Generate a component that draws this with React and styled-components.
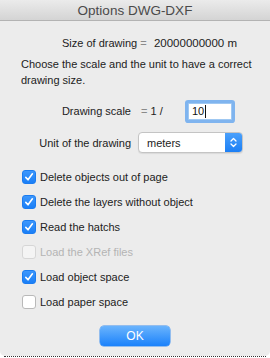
import React from 'react'
import styled, { createGlobalStyle } from 'styled-components'

const Global = createGlobalStyle`
  html, body {
    margin: 0;
    padding: 0;
    background: #ffffff;
  }
  body {
    font-family: "Liberation Sans", Arial, sans-serif;
    font-size: 11px;
    color: #222;
  }
`;

const Window = styled.div`
  width: 270px;
  height: 356px;
  background: #ececec;
  border-radius: 0 0 5px 5px;
  display: flex;
  flex-direction: column;
  overflow: hidden;
`;

const TitleBar = styled.div`
  height: 20px;
  background: linear-gradient(#ebebeb, #d4d4d4);
  border-bottom: 1px solid #b3b3b3;
  display: flex;
  align-items: center;
  justify-content: center;
  font-size: 13.5px;
  color: #4a4a4a;
`;

const Body = styled.div`
  display: flex;
  flex-direction: column;
  padding: 14px 0 0 21px;
`;

const SizeRow = styled.div`
  display: flex;
  gap: 4px;
  padding-left: 41px;
  line-height: 16px;
  white-space: nowrap;
`;

const Value = styled.span`
  font-size: 11.5px;
`;

const Equals = styled.span`
  color: #8a8a8a;
`;

const Text = styled.p`
  margin: 5px 0 0;
  width: 235px;
  line-height: 16px;
`;

const Form = styled.div`
  display: grid;
  grid-template-columns: 110px auto;
  column-gap: 7px;
  row-gap: 10px;
  margin-top: 12px;
  align-items: center;
`;

const Label = styled.span`
  text-align: right;
`;

const ScaleCell = styled.div`
  display: flex;
  align-items: center;
  height: 22px;
`;

const Ratio = styled.span`
  width: 47px;
  padding-left: 3px;
`;

const Input = styled.div`
  width: 44px;
  height: 17px;
  box-sizing: border-box;
  background: #fff;
  border: 1px solid #9fc8f2;
  box-shadow: 0 0 0 3px #7fb4ef;
  border-radius: 1px;
  display: flex;
  align-items: center;
  padding-left: 3px;
  color: #111;
`;

const Caret = styled.span`
  width: 1px;
  height: 13px;
  background: #111;
  margin-left: 1px;
`;

const Select = styled.div`
  width: 105px;
  height: 21px;
  box-sizing: border-box;
  background: #fff;
  border: 1px solid #c4c4c4;
  border-radius: 4px;
  display: flex;
  align-items: center;
  box-shadow: 0 1px 1px rgba(0, 0, 0, 0.08);
  overflow: hidden;
`;

const SelectText = styled.span`
  flex: 1;
  padding-left: 8px;
`;

const Stepper = styled.div`
  width: 17px;
  height: 100%;
  background: linear-gradient(#4aa0fb, #1c7ff5);
  display: flex;
  align-items: center;
  justify-content: center;
`;

const Checks = styled.div`
  display: flex;
  flex-direction: column;
  margin-top: 11px;
  padding-left: 1px;
`;

const CheckRow = styled.div`
  height: 25px;
  display: flex;
  align-items: center;
  gap: 4px;
  color: ${p => (p.disabled ? '#b4b4b4' : '#222')};
`;

const Box = styled.div`
  width: 14px;
  height: 14px;
  box-sizing: border-box;
  border-radius: 3px;
  display: flex;
  align-items: center;
  justify-content: center;
  background: ${p => (p.checked ? 'linear-gradient(#3d97fc, #1a7ff7)' : p.disabled ? '#f4f4f4' : '#fff')};
  border: 1px solid ${p => (p.checked ? '#1b7cf0' : p.disabled ? '#d6d6d6' : '#b9b9b9')};
`;

const Footer = styled.div`
  display: flex;
  justify-content: center;
  margin-top: 12px;
  padding-right: 21px;
`;

const OkButton = styled.button`
  width: 70px;
  height: 20px;
  border: none;
  border-radius: 4px;
  background: linear-gradient(#6ab4fd, #1b82fb);
  box-shadow: 0 0 0 0.5px #3b8ef0;
  color: #fff;
  font-family: inherit;
  font-size: 12px;
  padding: 0;
`;

const Below = styled.div`
  height: 2px;
  border-top: 1px dotted #333;
  margin: 0 4px;
`;

const Check = () => (
  <svg width="10" height="10" viewBox="0 0 10 10">
    <path d="M1.8 5.4 L4 7.8 L8.4 1.8" fill="none" stroke="#fff" strokeWidth="1.6" strokeLinecap="round" strokeLinejoin="round" />
  </svg>
);

const Arrows = () => (
  <svg width="9" height="13" viewBox="0 0 9 13">
    <path d="M2 5 L4.5 2.5 L7 5 M2 8 L4.5 10.5 L7 8" fill="none" stroke="#fff" strokeWidth="1.3" strokeLinecap="round" strokeLinejoin="round" />
  </svg>
);

const options = [
  { label: 'Delete objects out of page', checked: true },
  { label: 'Delete the layers without object', checked: true },
  { label: 'Read the hatchs', checked: true },
  { label: 'Load the XRef files', disabled: true },
  { label: 'Load object space', checked: true },
  { label: 'Load paper space' },
];

export default function App() {
  return (
    <>
      <Global />
      <Window>
        <TitleBar>Options DWG-DXF</TitleBar>
        <Body>
          <SizeRow>
            <span>Size of drawing <Equals>=</Equals></span>
            <Value>&nbsp;20000000000 m</Value>
          </SizeRow>
          <Text>Choose the scale and the unit to have a correct drawing size.</Text>
          <Form>
            <Label>Drawing scale</Label>
            <ScaleCell>
              <Ratio><Equals>=</Equals> 1 /</Ratio>
              <Input>10<Caret /></Input>
            </ScaleCell>
            <Label>Unit of the drawing</Label>
            <Select>
              <SelectText>meters</SelectText>
              <Stepper><Arrows /></Stepper>
            </Select>
          </Form>
          <Checks>
            {options.map(o => (
              <CheckRow key={o.label} disabled={o.disabled}>
                <Box checked={o.checked} disabled={o.disabled}>{o.checked && <Check />}</Box>
                {o.label}
              </CheckRow>
            ))}
          </Checks>
          <Footer>
            <OkButton>OK</OkButton>
          </Footer>
        </Body>
      </Window>
      <Below />
    </>
  )
}
